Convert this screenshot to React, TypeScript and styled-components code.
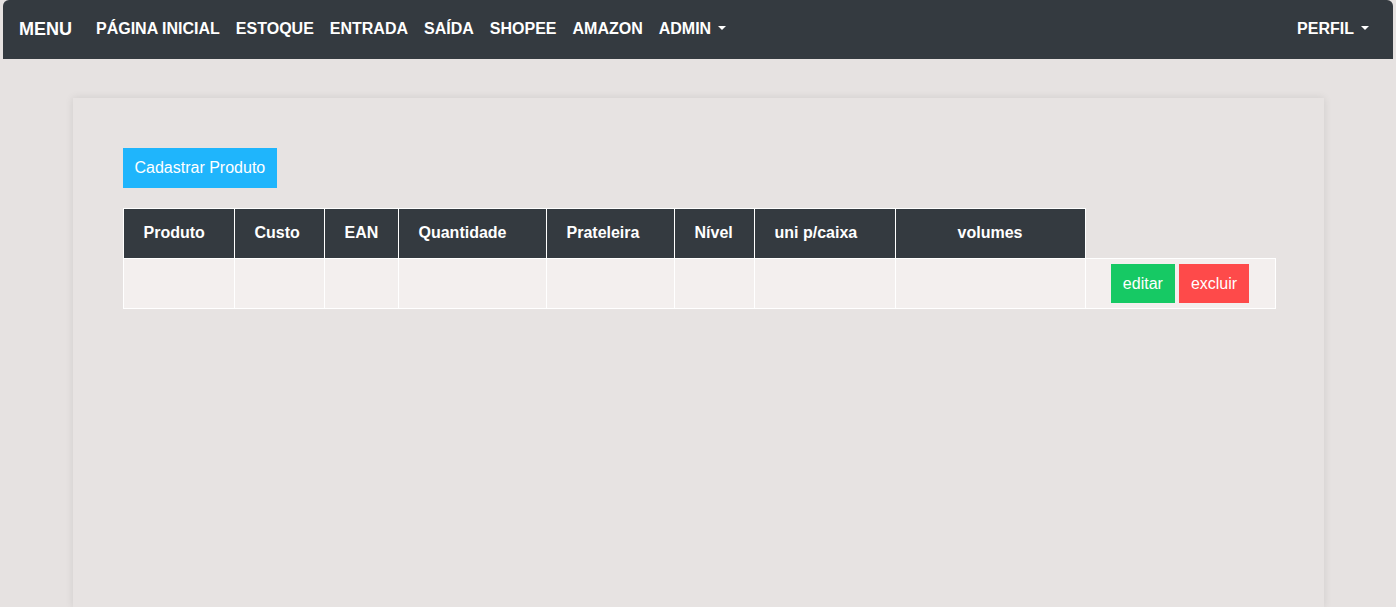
import React from 'react';
import styled, { createGlobalStyle } from 'styled-components';

const GlobalStyle = createGlobalStyle`
  html, body {
    margin: 0;
    padding: 0;
    background: #e6e2e1;
    font-family: "Liberation Sans", Arial, sans-serif;
  }
  * { box-sizing: border-box; }
`;

const Page = styled.div`
  padding: 0 3px;
  min-height: 607px;
`;

const Navbar = styled.nav`
  height: 59px;
  background: #343a40;
  border-radius: 6px 6px 0 0;
  display: flex;
  align-items: center;
  padding: 0 16px 1px;
  color: #fff;
`;

const Brand = styled.span`
  font-size: 18px;
  font-weight: 700;
  margin-right: 16px;
`;

const NavList = styled.div`
  display: flex;
  align-items: center;
  flex: 1;
`;

const NavLink = styled.a<{ $caret?: boolean }>`
  font-size: 16px;
  font-weight: 700;
  text-transform: uppercase;
  color: #fff;
  padding: 0 8px;
  text-decoration: none;
  white-space: nowrap;
  &::after {
    content: ${(p) => (p.$caret ? '""' : 'none')};
    display: inline-block;
    margin-left: 7px;
    vertical-align: 4px;
    border-top: 4px solid #fff;
    border-left: 4px solid transparent;
    border-right: 4px solid transparent;
  }
`;

const Card = styled.main`
  width: 90%;
  margin: 39px auto 0;
  min-height: 509px;
  background: #e7e3e2;
  box-shadow: 0 0 8px rgba(0, 0, 0, 0.1);
  padding: 50px;
`;

const PrimaryButton = styled.button`
  background: #1fb5fc;
  color: #fff;
  border: none;
  font-family: inherit;
  font-size: 16px;
  height: 40px;
  padding: 0 12px;
  cursor: pointer;
`;

const Table = styled.table`
  margin-top: 20px;
  width: 100%;
  border-collapse: collapse;
  table-layout: fixed;
`;

const Th = styled.th<{ $align?: string; $empty?: boolean }>`
  height: 50px;
  background: ${(p) => (p.$empty ? 'transparent' : '#343a40')};
  border: ${(p) => (p.$empty ? 'none' : '1px solid #fff')};
  color: #fff;
  font-size: 16px;
  font-weight: 700;
  text-align: ${(p) => p.$align || 'left'};
  padding: 0 20px 2px;
  white-space: nowrap;
`;

const Td = styled.td`
  height: 50px;
  background: #f3efee;
  border: 1px solid #fff;
  text-align: center;
  padding: 0;
`;

const ActionButton = styled.button<{ $color: string }>`
  background: ${(p) => p.$color};
  color: #fff;
  border: none;
  font-family: inherit;
  font-size: 16px;
  height: 39px;
  padding: 0 12px;
  margin: 0 2px;
  cursor: pointer;
  vertical-align: middle;
`;

const columns = [
  { label: 'Produto', width: 111 },
  { label: 'Custo', width: 90 },
  { label: 'EAN', width: 74 },
  { label: 'Quantidade', width: 148 },
  { label: 'Prateleira', width: 128 },
  { label: 'Nível', width: 80 },
  { label: 'uni p/caixa', width: 141 },
  { label: 'volumes', width: 190, align: 'center' },
  { label: '', width: 190, empty: true },
];

const links = ['Página Inicial', 'Estoque', 'Entrada', 'Saída', 'Shopee', 'Amazon'];

export default function App() {
  return (
    <Page>
      <GlobalStyle />
      <Navbar>
        <Brand>MENU</Brand>
        <NavList>
          {links.map((l) => (
            <NavLink key={l}>{l}</NavLink>
          ))}
          <NavLink $caret>Admin</NavLink>
        </NavList>
        <NavLink $caret>Perfil</NavLink>
      </Navbar>
      <Card>
        <PrimaryButton>Cadastrar Produto</PrimaryButton>
        <Table>
          <colgroup>
            {columns.map((c, i) => (
              <col key={i} style={{ width: c.width }} />
            ))}
          </colgroup>
          <thead>
            <tr>
              {columns.map((c, i) => (
                <Th key={i} $align={c.align} $empty={c.empty}>
                  {c.label}
                </Th>
              ))}
            </tr>
          </thead>
          <tbody>
            <tr>
              {columns.slice(0, 8).map((_, i) => (
                <Td key={i} />
              ))}
              <Td>
                <ActionButton $color="#16c964">editar</ActionButton>
                <ActionButton $color="#fe4a4a">excluir</ActionButton>
              </Td>
            </tr>
          </tbody>
        </Table>
      </Card>
    </Page>
  );
}
